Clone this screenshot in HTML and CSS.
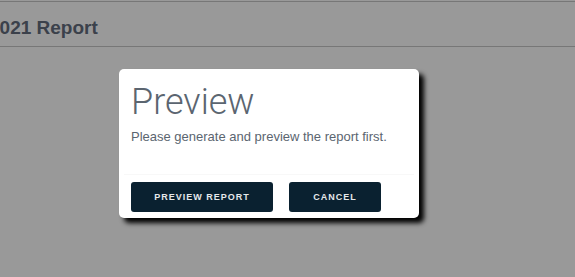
FILE: index.html
```html
<!DOCTYPE html>
<html lang="en">

<head>
    <meta charset="UTF-8">
    <meta name="viewport" content="width=device-width, initial-scale=1.0">
    <title>2021 Report</title>
    <link rel="stylesheet" href="styles.css">
</head>

<body>

    <div class="page">
        <div class="page-header">
            <h1 class="page-title">2021 Report</h1>
        </div>

        <div class="modal-wrap">
            <div class="modal">
                <div class="modal-body">
                    <h2 class="modal-title">Preview</h2>
                    <p class="modal-text">Please generate and preview the report first.</p>
                </div>
                <div class="modal-footer">
                    <button class="btn btn-wide">Preview Report</button>
                    <button class="btn">Cancel</button>
                </div>
            </div>
        </div>
    </div>

</body>

</html>
```

FILE: styles.css
```css
body {
    margin: 0;
    background-color: #999999;
    font-family: "Liberation Sans", Arial, sans-serif;
    height: 100vh;
    overflow: hidden;
}

.page {
    padding-top: 1px;
}

.page-header {
    border-top: 1px solid #777;
    border-bottom: 1px solid #777;
    box-sizing: border-box;
    height: 46px;
    display: flex;
    align-items: flex-end;
    padding-bottom: 6px;
}

.page-title {
    margin: 0 0 0 -11px;
    font-size: 19px;
    line-height: 24px;
    font-weight: bold;
    color: #3b414b;
}

.modal-wrap {
    padding: 22px 0 0 119px;
}

.modal {
    width: 300px;
    height: 149px;
    background: #fff;
    border-radius: 5px;
    box-shadow: 5px 5px 5px #000;
    display: flex;
    flex-direction: column;
}

.modal-body {
    padding: 11px 12px 0;
}

.modal-title {
    margin: 0;
    font-family: Roboto, "Liberation Sans", sans-serif;
    font-weight: 300;
    font-size: 36px;
    line-height: 44px;
    color: #5b6570;
}

.modal-text {
    margin: 5px 0 0;
    font-size: 13px;
    color: #5b6570;
}

.modal-footer {
    margin: auto 5px 0;
    padding: 7px 7px 6px;
    border-top: 1px solid #f8f8f8;
    display: flex;
    gap: 16px;
}

.btn {
    height: 30px;
    width: 92px;
    border: none;
    border-radius: 3px;
    background: #0a2130;
    color: #e6e9eb;
    font-family: "Liberation Sans", Arial, sans-serif;
    font-weight: bold;
    font-size: 9px;
    letter-spacing: 1px;
    text-transform: uppercase;
}

.btn-wide {
    width: 142px;
}
```
